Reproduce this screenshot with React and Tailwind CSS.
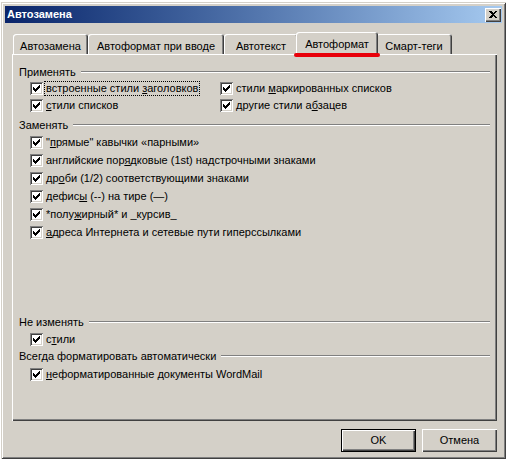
import React from "react";

const applyLeft = [
  { pre: "встроенные стили ", key: "з", post: "аголовков", focus: true },
  { pre: "", key: "с", post: "тили списков" },
];

const applyRight = [
  { pre: "стили ", key: "м", post: "аркированных списков" },
  { pre: "другие стили а", key: "б", post: "зацев" },
];

const replaceRows = [
  { pre: "\"", key: "п", post: "рямые\" кавычки «парными»" },
  { pre: "английские пор", key: "я", post: "дковые (1st) надстрочными знаками" },
  { pre: "др", key: "о", post: "би (1/2) соответствующими знаками" },
  { pre: "дефис", key: "ы", post: " (--) на тире (—)" },
  { pre: "*полу", key: "ж", post: "ирный* и _курсив_" },
  { pre: "", key: "а", post: "дреса Интернета и сетевые пути гиперссылками" },
];

const tabs = [
  { label: "Автозамена", w: "w-[75px]" },
  { label: "Автоформат при вводе", w: "w-[136px]" },
  { label: "Автотекст", w: "w-[74px]" },
  { label: "Автоформат", w: "w-[82px]", active: true },
  { label: "Смарт-теги", w: "w-[76px]" },
];

const CheckMark = () => (
  <svg width="7" height="7" viewBox="0 0 7 7" shapeRendering="crispEdges" className="block">
    <rect x="6" y="0" width="1" height="1" fill="#000" />
    <rect x="5" y="1" width="2" height="1" fill="#000" />
    <rect x="0" y="2" width="1" height="1" fill="#000" />
    <rect x="4" y="2" width="3" height="1" fill="#000" />
    <rect x="0" y="3" width="2" height="1" fill="#000" />
    <rect x="3" y="3" width="3" height="1" fill="#000" />
    <rect x="0" y="4" width="5" height="1" fill="#000" />
    <rect x="1" y="5" width="3" height="1" fill="#000" />
    <rect x="2" y="6" width="1" height="1" fill="#000" />
  </svg>
);

const CheckBox = () => (
  <span className="w-[13px] h-[13px] shrink-0 bg-white flex items-center justify-center shadow-[inset_1px_1px_0_#808080,inset_-1px_-1px_0_#ffffff,inset_2px_2px_0_#404040,inset_-2px_-2px_0_#d4d0c8]">
    <CheckMark />
  </span>
);

const CheckRow = ({ item, h = "h-[18px]" }) => (
  <div className={`flex items-center ${h}`}>
    <CheckBox />
    <span
      className={`ml-[1px] px-[1px] leading-[13px] whitespace-nowrap border border-dotted ${
        item.focus ? "border-black" : "border-transparent"
      }`}
    >
      {item.pre}
      <u className="underline underline-offset-[1px]">{item.key}</u>
      {item.post}
    </span>
  </div>
);

const GroupHeader = ({ title, className = "" }) => (
  <div className={`flex items-center h-[16px] ${className}`}>
    <span className="whitespace-nowrap">{title}</span>
    <div className="flex-1 ml-[5px] border-t border-t-[#808080] border-b border-b-white" />
  </div>
);

const Tab = ({ tab }) => {
  if (tab.active) {
    return (
      <div
        className={`relative z-10 -mx-[2px] -mb-[1px] h-[23px] ${tab.w} bg-[#d4d0c8] rounded-t-[3px] shadow-[inset_1px_1px_0_#ffffff,inset_-1px_0_0_#404040,inset_-2px_0_0_#808080] flex items-start justify-center pt-[4px]`}
      >
        <span className="whitespace-nowrap">{tab.label}</span>
        {/* red marker drawn over the tab */}
        <div className="absolute left-[-2px] right-[-2px] bottom-[-2px] h-[4px] rounded-full bg-[#e8000a]" />
      </div>
    );
  }
  return (
    <div
      className={`h-[20px] ${tab.w} rounded-t-[3px] shadow-[inset_1px_1px_0_#ffffff,inset_-1px_0_0_#404040,inset_-2px_0_0_#808080] flex items-start justify-center pt-[4px]`}
    >
      <span className="whitespace-nowrap">{tab.label}</span>
    </div>
  );
};

const Button = ({ children, isDefault }) => (
  <button
    className={`w-[75px] h-[23px] flex items-center justify-center bg-[#d4d0c8] ${
      isDefault
        ? "border border-black shadow-[inset_1px_1px_0_#ffffff,inset_-1px_-1px_0_#404040,inset_-2px_-2px_0_#808080]"
        : "shadow-[inset_1px_1px_0_#ffffff,inset_-1px_-1px_0_#404040,inset_-2px_-2px_0_#808080]"
    }`}
  >
    {children}
  </button>
);

export default function App() {
  return (
    <div className="w-[508px] h-[459px] bg-white pt-[2px] pl-[1px] font-['Liberation_Sans',Arial,sans-serif] text-[11px] text-black">
      <div className="w-[505px] h-[457px] bg-[#d4d0c8] p-[4px] flex flex-col shadow-[inset_1px_1px_0_#d4d0c8,inset_-1px_-1px_0_#404040,inset_2px_2px_0_#ffffff,inset_-2px_-2px_0_#808080]">

        {/* Title bar */}
        <div className="h-[17px] shrink-0 flex items-center justify-between pl-[2px] pr-[1px] bg-gradient-to-r from-[#0a246a] to-[#a6caf0]">
          <span className="text-white font-bold text-[11px]">Автозамена</span>
          <div className="w-[16px] h-[14px] flex items-center justify-center bg-[#d4d0c8] shadow-[inset_1px_1px_0_#ffffff,inset_-1px_-1px_0_#404040,inset_-2px_-2px_0_#808080]">
            <svg width="8" height="7" viewBox="0 0 8 7" shapeRendering="crispEdges">
              <path d="M0 0h2l2 2 2-2h2L5 3.5 8 7H6L4 5 2 7H0l3-3.5z" fill="#000" />
            </svg>
          </div>
        </div>

        {/* Body */}
        <div className="flex-1 flex flex-col pl-[7px] pr-[4px] pt-[9px]">

          {/* Tabs */}
          <div className="flex items-end h-[22px] pl-[1px]">
            {tabs.map((t) => (
              <Tab key={t.label} tab={t} />
            ))}
          </div>

          {/* Tab panel */}
          <div className="w-[485px] h-[367px] pt-[10px] px-[7px] shadow-[inset_1px_1px_0_#ffffff,inset_-1px_-1px_0_#404040,inset_-2px_-2px_0_#808080]">

            <GroupHeader title="Применять" />
            <div className="grid grid-cols-[190px_1fr] pl-[11px]">
              <div>
                {applyLeft.map((r) => (
                  <CheckRow key={r.post} item={r} h="h-[17px]" />
                ))}
              </div>
              <div>
                {applyRight.map((r) => (
                  <CheckRow key={r.post} item={r} h="h-[17px]" />
                ))}
              </div>
            </div>

            <GroupHeader title="Заменять" className="mt-[3px]" />
            <div className="pl-[11px]">
              {replaceRows.map((r) => (
                <CheckRow key={r.post} item={r} />
              ))}
            </div>

            <GroupHeader title="Не изменять" className="mt-[73px]" />
            <div className="pl-[11px]">
              <CheckRow item={{ pre: "с", key: "т", post: "или" }} />
            </div>

            <GroupHeader title="Всегда форматировать автоматически" />
            <div className="pl-[11px] mt-[1px]">
              <CheckRow item={{ pre: "", key: "н", post: "еформатированные документы WordMail" }} />
            </div>
          </div>

          {/* Buttons */}
          <div className="flex justify-end gap-[6px] mt-[8px] w-[485px]">
            <Button isDefault>OK</Button>
            <Button>Отмена</Button>
          </div>
        </div>
      </div>
    </div>
  );
}
